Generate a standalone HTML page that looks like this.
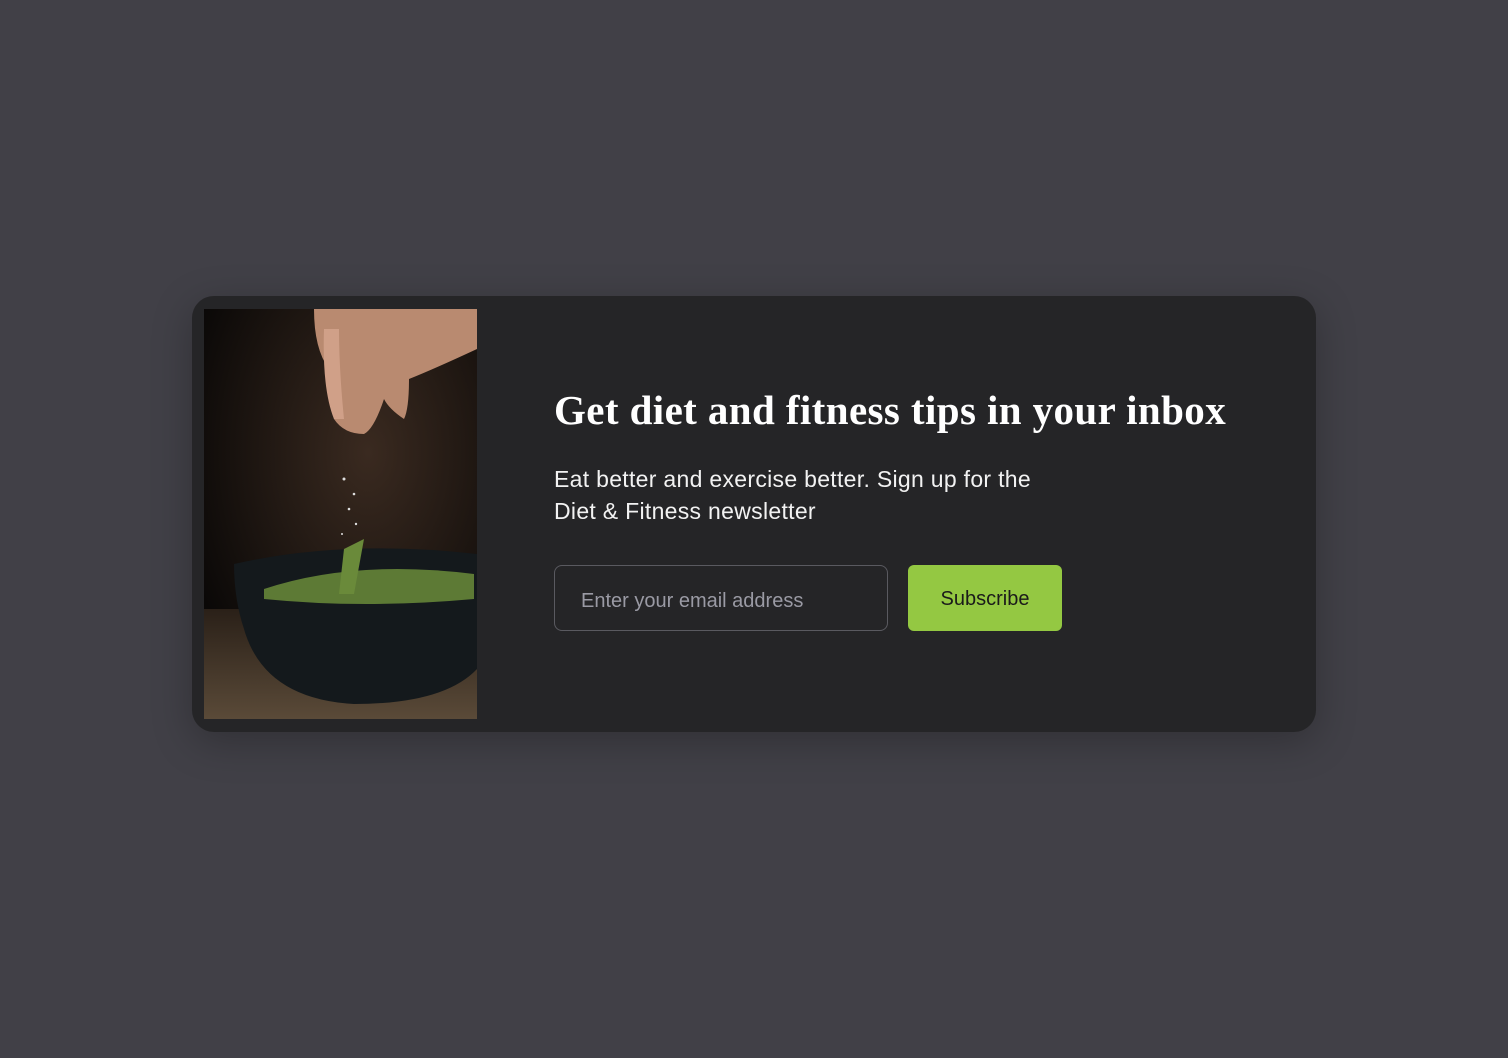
<!DOCTYPE html>
<html><head><meta charset="utf-8"><style>
html,body{margin:0;padding:0;width:1508px;height:1058px;background:#414047;overflow:hidden}
.card{position:absolute;left:192px;top:296px;width:1124px;height:436px;background:#252527;border-radius:22px;box-shadow:0 10px 40px rgba(0,0,0,.25)}
.img{position:absolute;left:12px;top:13px;width:273px;height:410px;overflow:hidden;background:#0c0a08}
h1{position:absolute;left:362px;top:90px;margin:0;font:700 41px/1.2 "Liberation Serif",serif;color:#fff;white-space:nowrap;letter-spacing:0.4px}
p{position:absolute;left:362px;top:167px;margin:0;font:300 23px/32px "Liberation Sans",sans-serif;color:#f2f2f2;letter-spacing:0.3px}
.in{position:absolute;left:362px;top:269px;width:334px;height:66px;border:1px solid #5a5a60;border-radius:8px;box-sizing:border-box;padding-left:26px;font:20px/70px "Liberation Sans",sans-serif;color:#9a9aa4}
.btn{position:absolute;left:716px;top:269px;width:154px;height:66px;background:#94c842;border-radius:6px;font:20px/68px "Liberation Sans",sans-serif;color:#1a1a1a;text-align:center}
</style></head><body>
<div class="card">
<div class="img">
<svg width="273" height="410" viewBox="0 0 273 410">
<defs>
<radialGradient id="bg" cx="0.6" cy="0.35" r="0.7"><stop offset="0" stop-color="#3a2a20"/><stop offset="1" stop-color="#0a0807"/></radialGradient>
<linearGradient id="tbl" x1="0" y1="0" x2="0" y2="1"><stop offset="0" stop-color="#2a2018"/><stop offset="1" stop-color="#5a4a38"/></linearGradient>
</defs>
<rect width="273" height="410" fill="url(#bg)"/>
<rect y="300" width="273" height="110" fill="url(#tbl)"/>
<path d="M110 0 L273 0 L273 40 Q230 60 205 70 Q205 100 200 110 Q185 100 180 90 Q170 120 160 125 Q140 125 130 110 L125 60 Q110 40 110 0Z" fill="#b98a70"/>
<path d="M120 20 Q118 80 130 110 L140 110 Q135 60 135 20Z" fill="#d0a088"/>
<path d="M30 255 Q140 230 273 245 L273 360 Q240 395 150 395 Q60 390 40 320 Q30 290 30 255Z" fill="#14191c"/>
<path d="M60 280 Q150 250 270 265 L270 290 Q160 300 60 290Z" fill="#5d7a35"/>
<path d="M140 240 L160 230 L150 285 L135 285Z" fill="#6a8a3a"/>
<g fill="#ddd"><circle cx="140" cy="170" r="1.5"/><circle cx="150" cy="185" r="1.3"/><circle cx="145" cy="200" r="1.3"/><circle cx="152" cy="215" r="1.2"/><circle cx="138" cy="225" r="1"/></g>
</svg>
</div>
<h1>Get diet and fitness tips in your inbox</h1>
<p>Eat better and exercise better. Sign up for the<br>Diet &amp; Fitness newsletter</p>
<div class="in">Enter your email address</div>
<div class="btn">Subscribe</div>
</div>
</body></html>
